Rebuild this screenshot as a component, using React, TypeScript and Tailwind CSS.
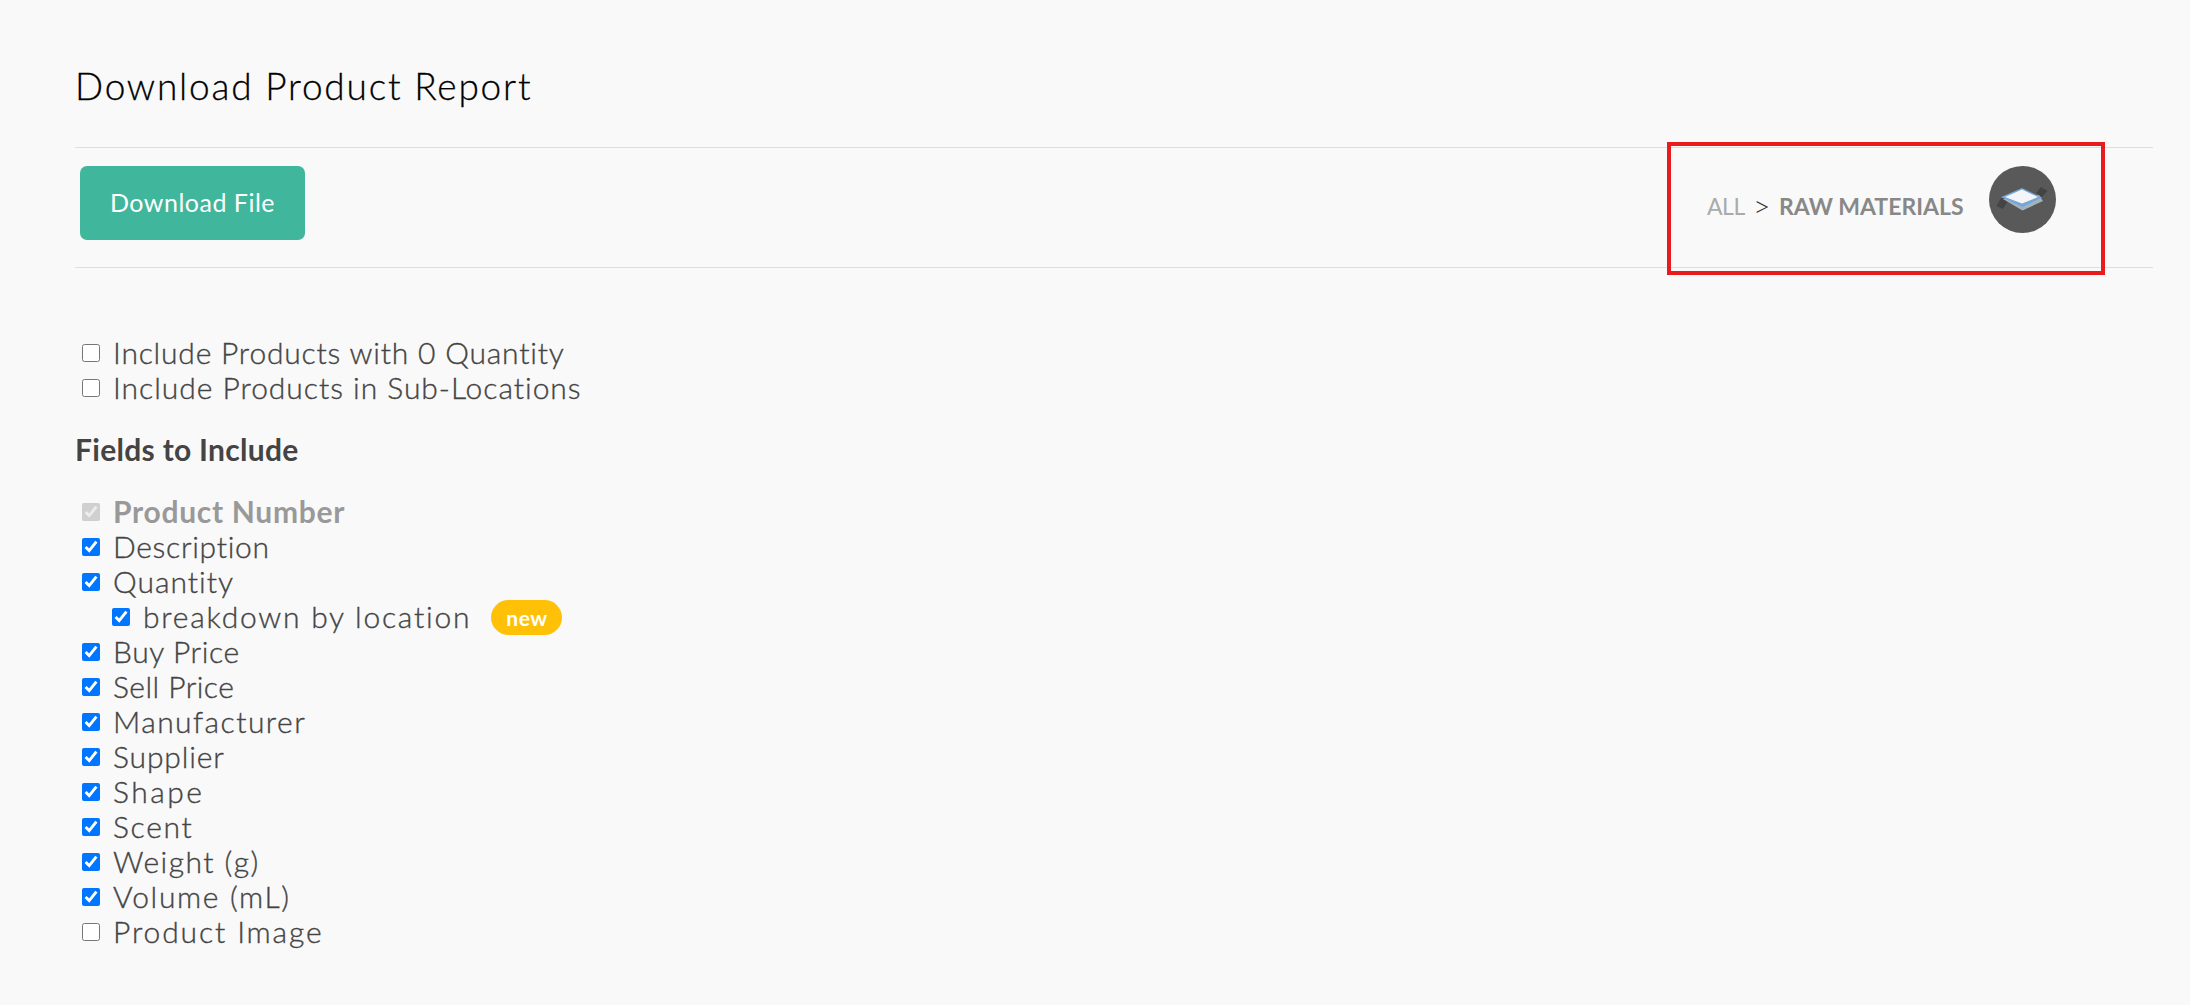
type Option = {
  label: string;
  spacing: string;
  checked?: boolean;
  disabled?: boolean;
  nested?: boolean;
  badge?: string;
};

const filters: Option[] = [
  { label: 'Include Products with 0 Quantity', spacing: 'tracking-[0.8px]' },
  { label: 'Include Products in Sub-Locations', spacing: 'tracking-[0.97px]' },
];

const fields: Option[] = [
  { label: 'Product Number', spacing: 'tracking-[0.7px]', checked: true, disabled: true },
  { label: 'Description', spacing: 'tracking-[0.7px]', checked: true },
  { label: 'Quantity', spacing: 'tracking-[1px]', checked: true },
  { label: 'breakdown by location', spacing: 'tracking-[1.76px]', checked: true, nested: true, badge: 'new' },
  { label: 'Buy Price', spacing: 'tracking-[0.6px]', checked: true },
  { label: 'Sell Price', spacing: 'tracking-[0.45px]', checked: true },
  { label: 'Manufacturer', spacing: 'tracking-[1.46px]', checked: true },
  { label: 'Supplier', spacing: 'tracking-[0.85px]', checked: true },
  { label: 'Shape', spacing: 'tracking-[2.5px]', checked: true },
  { label: 'Scent', spacing: 'tracking-[1.7px]', checked: true },
  { label: 'Weight (g)', spacing: 'tracking-[1.45px]', checked: true },
  { label: 'Volume (mL)', spacing: 'tracking-[1.65px]', checked: true },
  { label: 'Product Image', spacing: 'tracking-[1.88px]' },
];

function OptionRow({ option }: { option: Option }) {
  return (
    <label className={`flex h-[35px] items-start ${option.nested ? 'pl-[37px]' : 'pl-[7px]'}`}>
      <input
        type="checkbox"
        defaultChecked={option.checked}
        disabled={option.disabled}
        className="mt-[10px] h-[18px] w-[18px] shrink-0"
      />
      <span
        className={`ml-[13px] leading-[36px] whitespace-nowrap ${option.spacing} ${
          option.disabled ? 'font-bold text-[#999999]' : 'font-light [-webkit-text-stroke:0.35px]'
        } ${option.nested ? 'w-[348px]' : ''}`}
      >
        {option.label}
      </span>
      {option.badge && (
        <span className="mt-[2px] flex h-[35px] w-[71px] shrink-0 items-center justify-center rounded-full bg-[#ffc107] pl-[1px] text-[21px] font-bold tracking-[0.6px] text-white">
          {option.badge}
        </span>
      )}
    </label>
  );
}

function LocationIcon() {
  return (
    <svg viewBox="0 0 67 67" className="h-[67px] w-[67px]">
      <circle cx="33.5" cy="33.5" r="33.5" fill="#595959" />
      <path d="M7.5 40 L12 32 L19 35 L14 43 Z" fill="#444444" />
      <path d="M47 27 L52 21 L58.5 25 L53 31 Z" fill="#444444" />
      <path d="M14 33 L33.5 44.5 L54 35 L50 29 Z" fill="#a3b3bc" />
      <path d="M12 31 L33 22 L53 31.5 L33.5 41 Z" fill="#76a5d8" />
      <path d="M16 31 L33 23.5 L49 31 L33 37.5 Z" fill="#f3f5f8" />
    </svg>
  );
}

export default function App() {
  return (
    <main className="min-h-screen bg-[#f9f9f9] pt-[63px] pr-[37px] pl-[75px] font-['Lato','Open_Sans',sans-serif] text-[#444444]">
      <h1 className="h-[84px] text-[37px] leading-[45px] font-light tracking-[1.8px] text-black [-webkit-text-stroke:0.3px]">
        Download Product Report
      </h1>

      <div className="flex h-[121px] items-start justify-between border-y border-[#dedede]">
        <button className="mt-[18px] ml-[5px] h-[74px] w-[225px] rounded-[7px] bg-[#40b69c] text-[25px] tracking-[0.5px] text-white">
          Download File
        </button>

        <nav className="relative mr-[48px] flex h-[119px] w-[438px] items-start pl-[40px] text-[23px] leading-[28px]">
          <span className="mt-[44px] w-[46px] tracking-[-0.5px] text-[#aaaaaa]">ALL</span>
          <span className="mt-[43px] w-[26px] text-[30px] font-light text-[#333333]">&gt;</span>
          <span className="mt-[44px] w-[210px] font-bold text-[#888888]">RAW MATERIALS</span>
          <span className="mt-[18px]">
            <LocationIcon />
          </span>
          <span className="pointer-events-none absolute inset-x-0 -top-[6px] -bottom-[8px] border-4 border-[#e81c1c]" />
        </nav>
      </div>

      <section className="mt-[66px] text-[30px]">
        {filters.map((option) => (
          <OptionRow key={option.label} option={option} />
        ))}

        <h2 className="my-[27px] h-[35px] leading-[37px] font-bold tracking-[0.3px]">Fields to Include</h2>

        {fields.map((option) => (
          <OptionRow key={option.label} option={option} />
        ))}
      </section>
    </main>
  );
}
